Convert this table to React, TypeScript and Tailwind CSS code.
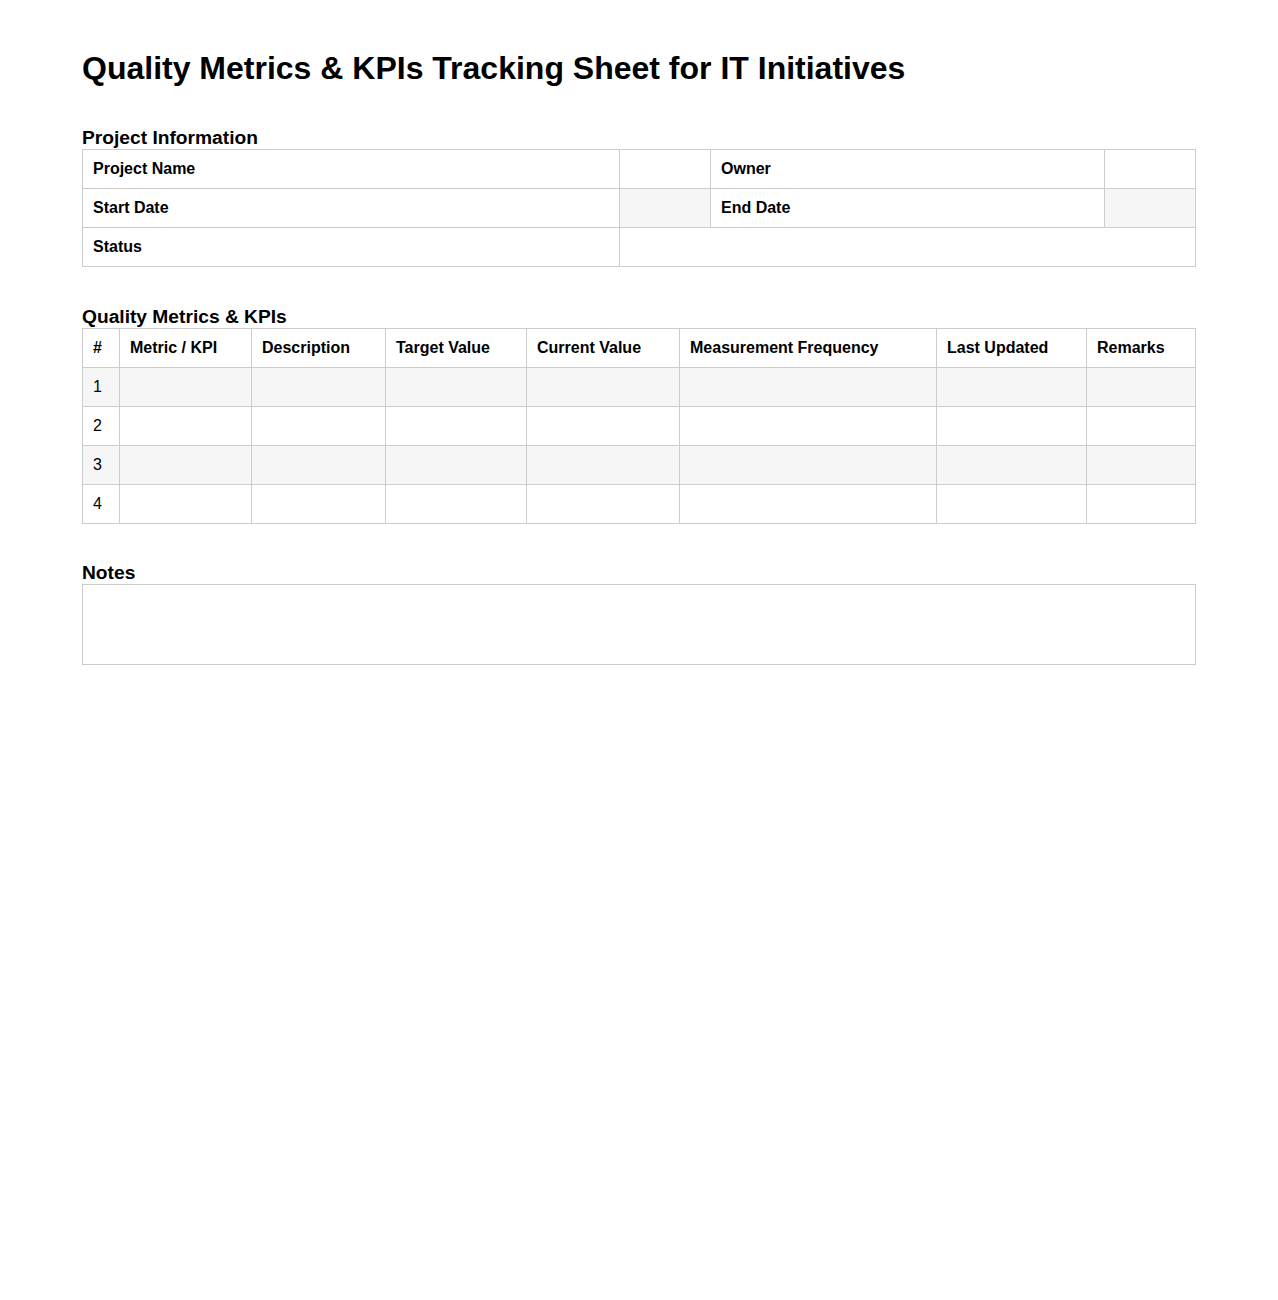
import React from 'react';

const cell = 'border border-[#cccccc] px-[10px] py-[10px] leading-[18px] text-left align-middle';

const metricHeads = [
  '#',
  'Metric / KPI',
  'Description',
  'Target Value',
  'Current Value',
  'Measurement Frequency',
  'Last Updated',
  'Remarks',
];

const App = () => {
  return (
    <div className="min-h-[1300px] bg-white text-black font-['Liberation_Sans',Arial,sans-serif]">
      <div className="px-[82px] pt-[50px]">
        <h1 className="text-[32px] font-bold leading-[37px]">
          Quality Metrics &amp; KPIs Tracking Sheet for IT Initiatives
        </h1>

        <section className="mt-[40px]">
          <h2 className="text-[19.2px] font-bold leading-[22px]">Project Information</h2>
          <table className="w-[1113px] table-fixed border-collapse text-[16px]">
            <colgroup>
              <col className="w-[537px]" />
              <col className="w-[91px]" />
              <col className="w-[394px]" />
              <col className="w-[91px]" />
            </colgroup>
            <tbody>
              <tr>
                <th className={`${cell} font-bold`}>Project Name</th>
                <td className={cell}></td>
                <th className={`${cell} font-bold`}>Owner</th>
                <td className={cell}></td>
              </tr>
              <tr>
                <th className={`${cell} font-bold`}>Start Date</th>
                <td className={`${cell} bg-[#f6f6f6]`}></td>
                <th className={`${cell} font-bold`}>End Date</th>
                <td className={`${cell} bg-[#f6f6f6]`}></td>
              </tr>
              <tr>
                <th className={`${cell} font-bold`}>Status</th>
                <td className={cell} colSpan={3}></td>
              </tr>
            </tbody>
          </table>
        </section>

        <section className="mt-[39px]">
          <h2 className="text-[19.2px] font-bold leading-[22px]">Quality Metrics &amp; KPIs</h2>
          <table className="w-[1113px] table-fixed border-collapse text-[16px]">
            <colgroup>
              <col className="w-[37px]" />
              <col className="w-[132px]" />
              <col className="w-[134px]" />
              <col className="w-[141px]" />
              <col className="w-[153px]" />
              <col className="w-[257px]" />
              <col className="w-[150px]" />
              <col className="w-[109px]" />
            </colgroup>
            <thead>
              <tr>
                {metricHeads.map((h) => (
                  <th key={h} className={`${cell} font-bold whitespace-nowrap`}>
                    {h}
                  </th>
                ))}
              </tr>
            </thead>
            <tbody>
              {[1, 2, 3, 4].map((n) => (
                <tr key={n} className={n % 2 === 1 ? 'bg-[#f6f6f6]' : ''}>
                  <td className={cell}>{n}</td>
                  {metricHeads.slice(1).map((h) => (
                    <td key={h} className={cell}></td>
                  ))}
                </tr>
              ))}
            </tbody>
          </table>
        </section>

        <section className="mt-[38px]">
          <h2 className="text-[19.2px] font-bold leading-[22px]">Notes</h2>
          <div className="h-[81px] border border-[#cccccc]"></div>
        </section>
      </div>
    </div>
  );
};

export default App;
